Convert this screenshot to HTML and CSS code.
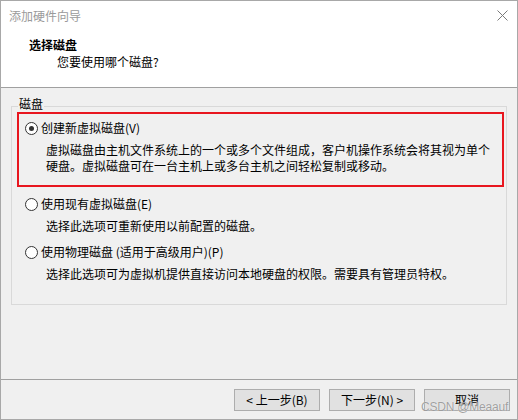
FILE: index.html
```html
<!DOCTYPE html>
<html lang="zh-CN">
<head>
<meta charset="utf-8">
<title>添加硬件向导</title>
<link rel="stylesheet" href="styles.css">
</head>
<body>
<div class="window">
  <div class="header">
    <div class="titlebar">
      <span class="title">添加硬件向导</span>
      <svg class="close" width="11" height="11" viewBox="0 0 11 11"><path d="M0.5 0.5 L10.5 10.5 M10.5 0.5 L0.5 10.5" stroke="#7a7a7a" stroke-width="1" fill="none"/></svg>
    </div>
    <div class="heading">选择磁盘</div>
    <div class="subheading">您要使用哪个磁盘?</div>
  </div>
  <div class="content">
    <div class="group">
      <span class="legend">磁盘</span>
      <div class="option selected">
        <div class="row"><span class="radio checked"></span><span class="label">创建新虚拟磁盘(V)</span></div>
        <div class="desc">虚拟磁盘由主机文件系统上的一个或多个文件组成，客户机操作系统会将其视为单个<br>硬盘。虚拟磁盘可在一台主机上或多台主机之间轻松复制或移动。</div>
      </div>
      <div class="option">
        <div class="row"><span class="radio"></span><span class="label">使用现有虚拟磁盘(E)</span></div>
        <div class="desc">选择此选项可重新使用以前配置的磁盘。</div>
      </div>
      <div class="option">
        <div class="row"><span class="radio"></span><span class="label">使用物理磁盘 (适用于高级用户)(P)</span></div>
        <div class="desc">选择此选项可为虚拟机提供直接访问本地硬盘的权限。需要具有管理员特权。</div>
      </div>
    </div>
  </div>
  <div class="footer">
    <button class="btn">&lt; 上一步(B)</button>
    <button class="btn">下一步(N) &gt;</button>
    <button class="btn">取消</button>
  </div>
  <span class="watermark">CSDN @Meaauf</span>
</div>
</body>
</html>
```

FILE: styles.css
```css
* { box-sizing: border-box; }
html, body { margin: 0; padding: 0; }
body {
  width: 518px;
  height: 420px;
  font-family: "Noto Sans CJK SC", "Noto Sans", sans-serif;
  font-size: 12px;
  color: #000;
  background: #fff;
}
.window {
  position: relative;
  width: 518px;
  height: 420px;
  border: 1px solid #a8a8a8;
  display: flex;
  flex-direction: column;
  background: #f0f0f0;
}
.header {
  height: 87px;
  flex: none;
  background: #fff;
  border-bottom: 1px solid #a0a0a0;
}
.titlebar {
  height: 30px;
  display: flex;
  align-items: center;
  justify-content: space-between;
  padding: 0 9px 0 8px;
}
.title {
  color: #9a9a9a;
  line-height: 16px;
}
.close { display: block; margin-top: -2px; }
.heading {
  margin-top: 6px;
  padding-left: 28px;
  font-weight: bold;
  line-height: 16px;
}
.subheading {
  margin-top: 1px;
  padding-left: 56px;
  line-height: 16px;
}
.content {
  flex: 1;
  padding: 18px 10px 0;
}
.group {
  position: relative;
  border: 1px solid #d9d9d9;
  padding: 5px 5px 20px 5px;
}
.legend {
  position: absolute;
  top: -11px;
  left: 6px;
  padding: 0 1px;
  line-height: 16px;
  background: #f0f0f0;
}
.option {
  border: 2px solid transparent;
  padding: 6px 6px 0 6px;
}
.option.selected {
  border-color: #e8161f;
  padding-bottom: 11px;
  margin-right: -3px;
}
.option + .option { margin-top: 0; }
.option.selected + .option { margin-top: 1px; }
.row {
  display: flex;
  align-items: center;
  height: 16px;
}
.radio {
  width: 13px;
  height: 13px;
  border: 1px solid #333;
  border-radius: 50%;
  background: #fff;
  margin-right: 3px;
  display: flex;
  align-items: center;
  justify-content: center;
  flex: none;
}
.radio.checked::after {
  content: "";
  width: 5px;
  height: 5px;
  border-radius: 50%;
  background: #333;
}
.label { line-height: 16px; }
.desc {
  margin-top: 6px;
  padding-left: 21px;
  line-height: 16px;
}
.footer {
  height: 40px;
  flex: none;
  border-top: 1px solid #a0a0a0;
  display: flex;
  justify-content: flex-end;
  align-items: flex-start;
  gap: 9px;
  padding: 9px 7px 0 0;
}
.btn {
  width: 86px;
  height: 22px;
  border: 1px solid #adadad;
  background: #e1e1e1;
  font-family: "Noto Sans CJK SC", "Noto Sans", sans-serif;
  font-size: 12px;
  color: #000;
  padding: 0;
  line-height: 18px;
}
.watermark {
  position: absolute;
  left: 420px;
  top: 399px;
  font-family: "Liberation Sans", Arial, sans-serif;
  font-size: 12px;
  color: rgba(130, 130, 130, 0.75);
  text-shadow: 0 0 1px #fff;
  letter-spacing: -0.2px;
}
```
